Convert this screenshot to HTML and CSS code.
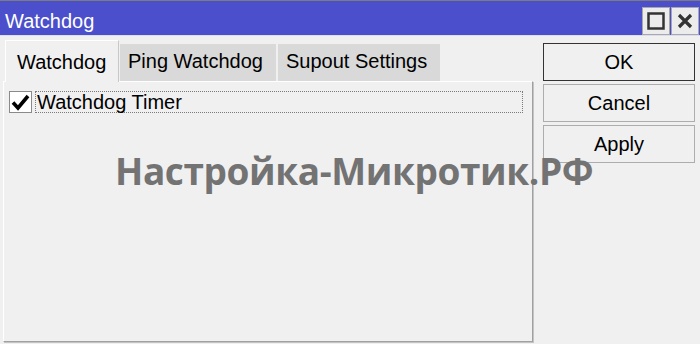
FILE: index.html
```html
<!DOCTYPE html>
<html lang="en">
<head>
  <meta charset="UTF-8">
  <title>Watchdog</title>
  <link rel="stylesheet" href="styles.css">
</head>
<body>
  <main class="window">
    <div class="titlebar">
      <div class="title">Watchdog</div>
      <div class="wbtns">
        <div class="wbtn">
          <svg width="20" height="20" viewBox="0 0 20 20"><rect x="2.5" y="2.5" width="15" height="15" fill="none" stroke="#333" stroke-width="2.5"/></svg>
        </div>
        <div class="wbtn">
          <svg width="20" height="20" viewBox="0 0 20 20"><path d="M4 4 L16 16 M16 4 L4 16" stroke="#333" stroke-width="3.2"/></svg>
        </div>
      </div>
    </div>

    <div class="content">
      <div class="left">
        <div class="tabs">
          <div class="tab active">Watchdog</div>
          <div class="tab">Ping Watchdog</div>
          <div class="tab">Supout Settings</div>
        </div>
        <div class="panel">
          <div class="row">
            <div class="check">
              <svg width="21" height="20" viewBox="0 0 21 20"><path d="M3 10.5 L8 16 L18 4" fill="none" stroke="#000" stroke-width="3.6"/></svg>
            </div>
            <div class="label">Watchdog Timer</div>
          </div>
        </div>
      </div>
      <div class="right">
        <div class="btn default">OK</div>
        <div class="btn">Cancel</div>
        <div class="btn">Apply</div>
      </div>
    </div>

    <!-- watermark -->
    <div class="mark">Настройка-Микротик.РФ</div>
  </main>
</body>
</html>
```

FILE: styles.css
```css
* {
  margin: 0;
  padding: 0;
  box-sizing: border-box;
}
body {
  background-color: #f0f0f0;
  font-family: "Liberation Sans", Arial, sans-serif;
  font-size: 20px;
  color: #000;
}
.window {
  position: relative;
  width: 700px;
  height: 344px;
  overflow: hidden;
}
.titlebar {
  height: 36px;
  border-top: 1px solid #7c7c7c;
  border-bottom: 1px solid #dcdcf2;
  background-color: #4b4fcc;
  display: flex;
  justify-content: space-between;
}
.title {
  color: #fff;
  padding: 6px 0 0 5px;
  line-height: 28px;
}
.wbtns {
  display: flex;
  gap: 1px;
  margin: 6px 1px 0 0;
}
.wbtn {
  width: 28px;
  height: 28px;
  background-color: #ececec;
  border: 1px solid #a8a8a8;
  display: flex;
  align-items: center;
  justify-content: center;
}

.content {
  display: flex;
}
.left {
  width: 530px;
  margin-left: 3px;
}
.tabs {
  display: flex;
  align-items: flex-end;
  padding: 3px 0 0 2px;
  height: 45px;
}
.tab {
  height: 37px;
  padding: 4px 8px 8px 8px;
  line-height: 24px;
  background-color: #d9d9d9;
  border-top: 1px solid #dadada;
  white-space: nowrap;
}
.tab.active {
  width: 114px;
  height: 42px;
  padding: 9px 0 8px 11px;
  background-color: #f0f0f0;
  border: 1px solid #ffffff;
  border-bottom: none;
  border-right: 1px solid #c8c8c8;
  margin-bottom: -1px;
  position: relative;
  z-index: 1;
}
.tab:nth-child(2) {
  width: 156px;
  margin-left: 1px;
}
.tab:nth-child(3) {
  width: 162px;
  margin-left: 2px;
}
.panel {
  height: 261px;
  border: 1px solid #a0a0a0;
  border-top-color: #ffffff;
  border-left-color: #ffffff;
  box-shadow: 1px 1px 0 #c4c4c4;
  padding: 9px 9px 0 5px;
}
.row {
  display: flex;
  align-items: center;
  gap: 3px;
}
.check {
  width: 23px;
  height: 22px;
  background-color: #fff;
  border: 1px solid #8a8a8a;
  display: flex;
  align-items: center;
  justify-content: center;
}
.label {
  flex: 1;
  height: 22px;
  line-height: 20px;
  padding-left: 1px;
  border: 1px dotted #7a7a7a;
}

.right {
  width: 152px;
  margin: 7px 0 0 10px;
  display: flex;
  flex-direction: column;
  gap: 3px;
}
.btn {
  height: 38px;
  line-height: 36px;
  text-align: center;
  background-color: #f0f0f0;
  border: 1px solid #adadad;
}
.btn.default {
  border: 1px solid #333;
}

.mark {
  position: absolute;
  left: 115px;
  top: 153px;
  font-family: "Open Sans", sans-serif;
  font-weight: 700;
  font-size: 37px;
  letter-spacing: -0.4px;
  line-height: 36px;
  color: #737373;
  white-space: nowrap;
}
```
